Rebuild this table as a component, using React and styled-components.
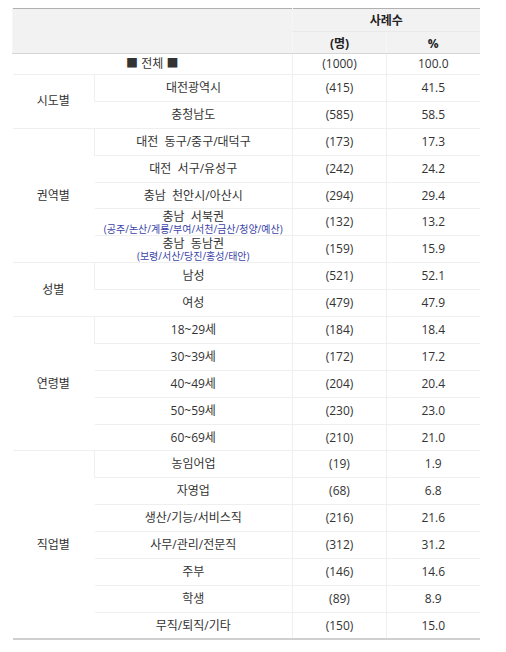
import React from "react";
import styled, { createGlobalStyle } from "styled-components";

const Global = createGlobalStyle`
  html, body { margin: 0; padding: 0; background: #fff; }
  body { font-family: "Open Sans", "Noto Sans CJK KR", sans-serif; color: #333; }
`;

const Wrap = styled.div`
  padding: 8px 0 0 12px;
`;

const Table = styled.table`
  border-collapse: collapse;
  table-layout: fixed;
  width: 467px;
  border-top: 1px solid #b0b0b0;
  border-bottom: 2px solid #cfcfcf;
  font-family: "Open Sans", "Noto Sans CJK KR", sans-serif;
  font-size: 12px;
  color: #333;
`;

const Col = styled.col`
  width: ${(p) => p.$w}px;
`;

const Th = styled.th`
  background: #f2f2f2;
  font-weight: bold;
  color: #222;
  height: 19px;
  padding: 2.5px 0 0;
  text-align: center;
  vertical-align: middle;
  line-height: 14px;
  border-left: 1px solid #f6f6f6;
  border-bottom: 1px solid ${(p) => (p.$last ? "#d6d6d6" : "#e9e9e9")};
`;

const Td = styled.td`
  box-sizing: border-box;
  height: ${(p) => (p.$total ? 21 : 26.9)}px;
  padding: 0;
  text-align: center;
  vertical-align: middle;
  line-height: 14px;
  border-bottom: 1px solid #efefef;
  border-left: 1px solid #efefef;
  &:first-child { border-left: none; }
  white-space: pre;
`;

const GroupTd = styled(Td)`
  border-left: none;
`;

const Main = styled.div`
  line-height: 13px;
`;

const Sub = styled.div`
  font-size: 10px;
  line-height: 12px;
  color: #3b44a8;
`;

const groups = [
  {
    name: "시도별",
    rows: [
      ["대전광역시", "(415)", "41.5"],
      ["충청남도", "(585)", "58.5"],
    ],
  },
  {
    name: "권역별",
    rows: [
      ["대전  동구/중구/대덕구", "(173)", "17.3"],
      ["대전  서구/유성구", "(242)", "24.2"],
      ["충남  천안시/아산시", "(294)", "29.4"],
      ["충남  서북권", "(132)", "13.2", "(공주/논산/계룡/부여/서천/금산/청양/예산)"],
      ["충남  동남권", "(159)", "15.9", "(보령/서산/당진/홍성/태안)"],
    ],
  },
  {
    name: "성별",
    rows: [
      ["남성", "(521)", "52.1"],
      ["여성", "(479)", "47.9"],
    ],
  },
  {
    name: "연령별",
    rows: [
      ["18~29세", "(184)", "18.4"],
      ["30~39세", "(172)", "17.2"],
      ["40~49세", "(204)", "20.4"],
      ["50~59세", "(230)", "23.0"],
      ["60~69세", "(210)", "21.0"],
    ],
  },
  {
    name: "직업별",
    rows: [
      ["농임어업", "(19)", "1.9"],
      ["자영업", "(68)", "6.8"],
      ["생산/기능/서비스직", "(216)", "21.6"],
      ["사무/관리/전문직", "(312)", "31.2"],
      ["주부", "(146)", "14.6"],
      ["학생", "(89)", "8.9"],
      ["무직/퇴직/기타", "(150)", "15.0"],
    ],
  },
];

export default function App() {
  return (
    <Wrap>
      <Global />
      <Table>
        <colgroup>
          <Col $w={82} />
          <Col $w={198} />
          <Col $w={94} />
          <Col $w={93} />
        </colgroup>
        <thead>
          <tr>
            <Th colSpan={2} rowSpan={2} $last />
            <Th colSpan={2}>사례수</Th>
          </tr>
          <tr>
            <Th $last>(명)</Th>
            <Th $last>%</Th>
          </tr>
        </thead>
        <tbody>
          <tr>
            <Td colSpan={2} $total>■ 전체 ■</Td>
            <Td $total>(1000)</Td>
            <Td $total>100.0</Td>
          </tr>
          {groups.map((g) =>
            g.rows.map((r, i) => (
              <tr key={g.name + i}>
                {i === 0 && <GroupTd rowSpan={g.rows.length}>{g.name}</GroupTd>}
                <Td>
                  {r[3] ? (
                    <>
                      <Main>{r[0]}</Main>
                      <Sub>{r[3]}</Sub>
                    </>
                  ) : (
                    r[0]
                  )}
                </Td>
                <Td>{r[1]}</Td>
                <Td>{r[2]}</Td>
              </tr>
            ))
          )}
        </tbody>
      </Table>
    </Wrap>
  );
}
